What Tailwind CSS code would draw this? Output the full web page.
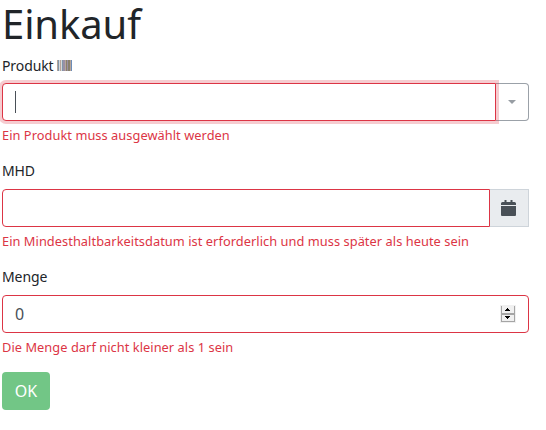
<!DOCTYPE html>
<html lang="de">
<head>
<meta charset="utf-8">
<title>Einkauf</title>
<script src="https://cdn.jsdelivr.net/npm/@tailwindcss/browser@4"></script>
</head>
<body class="bg-white text-[#212529] font-['Noto_Sans',sans-serif]">
<main class="ml-[2px] w-[527px]">
  <h1 class="text-[40px] leading-[48px] h-[56px] tracking-[-0.1px]">Einkauf</h1>
  <form>
    <div class="h-[105px]">
      <label class="flex h-[27px] items-start gap-[3px] text-[14px] leading-5 tracking-[-0.1px]">Produkt
        <svg class="mt-1 h-[11px] w-[15px]" viewBox="0 0 15 11" shape-rendering="crispEdges">
          <path fill="#b7a59a" d="M0 0h15v11H0z"/>
          <path fill="#8096ab" d="M1 0h1v11H1zM5 0h1v11H5z"/>
          <path fill="#d6d9dc" d="M2 0h1v11H2zM4 0h1v11H4z"/>
          <path fill="#9a90a5" d="M6 0h2v11H6zM10 0h1v11h-1z"/>
          <path fill="#89806c" d="M9 0h1v11H9zM11 0h2v11h-2z"/>
          <path fill="#6b8cb8" d="M14 0h1v11h-1z"/>
        </svg>
      </label>
      <div class="flex h-[38px]">
        <div class="relative z-10 flex w-[494px] items-center rounded-l border border-[#dc3545] bg-white pl-3 shadow-[0_0_0_3px_rgba(220,53,69,0.25)]">
          <span class="h-[22px] w-px bg-[#495057]"></span>
        </div>
        <div class="flex w-[33px] items-center justify-center rounded-r border border-l-0 border-[#9ba1a8]">
          <svg class="h-1 w-2" viewBox="0 0 8 4"><path fill="#979da3" d="M0 0h8L4 4z"/></svg>
        </div>
      </div>
      <p class="mt-[4px] text-[12.8px] leading-5 tracking-[0.055px] text-[#dc3545]">Ein Produkt muss ausgewählt werden</p>
    </div>
    <div class="h-[106px]">
      <label class="block h-[28px] text-[14px] leading-5 tracking-[-0.1px]">MHD</label>
      <div class="flex h-[38px]">
        <div class="w-[488px] rounded-l border border-[#dc3545]"></div>
        <div class="flex w-[39px] items-center border border-l-0 border-[#ced4da] bg-[#e9ecef] pl-[11px]">
          <svg class="h-4 w-[15px]" viewBox="0 0 15 16"><path fill="#495057" d="M3.500 0h2v2h4V0h2v2h2A1.500 1.500 0 0 1 15 3.500V5H0V3.500A1.500 1.500 0 0 1 1.500 2h2zM0 6h15v9a1 1 0 0 1-1 1H1a1 1 0 0 1-1-1z"/></svg>
        </div>
      </div>
      <p class="mt-[4px] text-[12.8px] leading-5 tracking-[0.055px] text-[#dc3545]">Ein Mindesthaltbarkeitsdatum ist erforderlich und muss später als heute sein</p>
    </div>
    <div class="h-[105px]">
      <label class="block h-[28px] text-[14px] leading-5 tracking-[-0.1px]">Menge</label>
      <div class="flex h-[38px] items-center justify-between rounded border border-[#dc3545] pl-3 pr-3">
        <span class="text-[16px] leading-6 text-[#495057]">0</span>
        <svg class="h-[18px] w-4" viewBox="0 0 16 18" shape-rendering="crispEdges">
          <path fill="#f0f0f0" d="M0 0h16v18H0z"/>
          <path fill="#a5a5a5" d="M1 1h1v16H1zM14 1h1v16h-1zM1 8h14v2H1zM1 16h14v1H1z"/>
          <path fill="#000" d="M7 3h1v1H7zM6 4h3v1H6zM5 5h5v1H5zM5 11h5v1H5zM6 12h3v1H6zM7 13h1v1H7z"/>
        </svg>
      </div>
      <p class="mt-[4px] text-[12.8px] leading-5 tracking-[0.055px] text-[#dc3545]">Die Menge darf nicht kleiner als 1 sein</p>
    </div>
    <button type="button" class="block h-[38px] w-12 rounded bg-[#72c686] text-[16px] leading-6 text-white">OK</button>
  </form>
</main>
</body>
</html>
